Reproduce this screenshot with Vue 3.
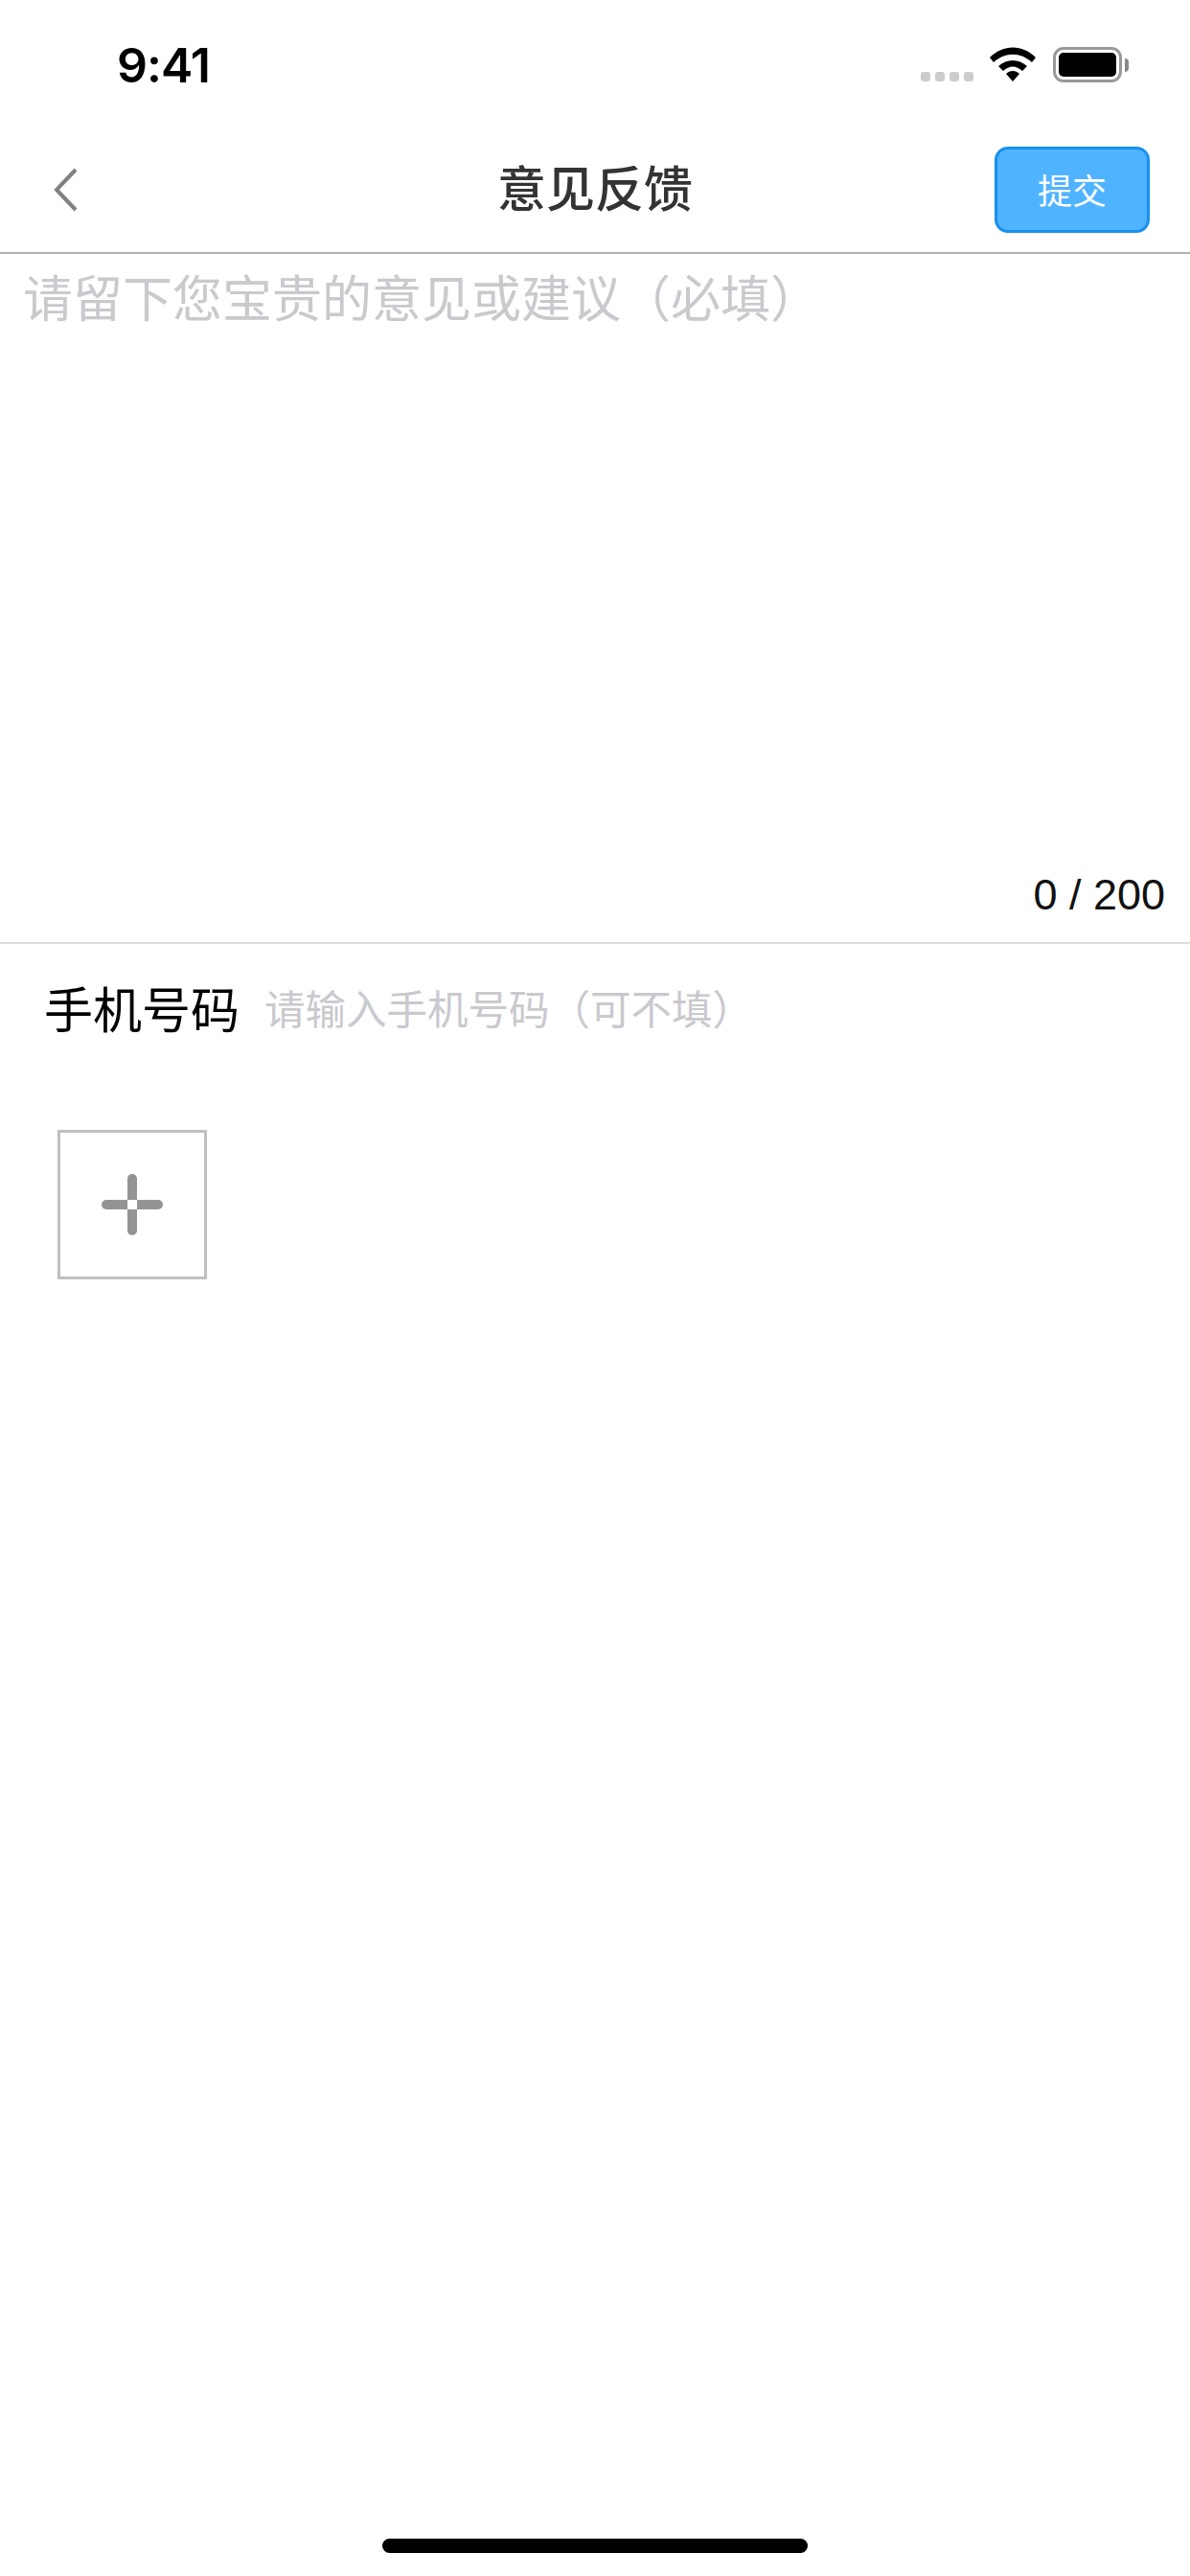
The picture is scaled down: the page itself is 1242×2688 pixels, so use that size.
<template>
  <div class="page">
    <div class="status-bar">
      <span class="time">9:41</span>
      <div class="status-icons">
        <div class="signal">
          <i v-for="n in 4" :key="n"></i>
        </div>
        <svg class="wifi" width="48" height="36" viewBox="0 0 48 36">
          <path d="M0 11 C14 -3 34 -3 48 11 L44 16 C32 5 16 5 4 16 Z" fill="#000"/>
          <path d="M9 20 C18 12 30 12 39 20 L34 25 C27 19 21 19 14 25 Z" fill="#000"/>
          <path d="M17 28 C21 24 27 24 31 28 L24 36 Z" fill="#000"/>
        </svg>
        <div class="battery">
          <div class="battery-body"><div class="battery-fill"></div></div>
          <div class="battery-cap"></div>
        </div>
      </div>
    </div>

    <div class="nav-bar">
      <svg class="back" width="26" height="48" viewBox="0 0 26 48">
        <path d="M23 3 L3 24 L23 45" fill="none" stroke="#808080" stroke-width="4"/>
      </svg>
      <span class="title">意见反馈</span>
      <div class="submit">提交</div>
    </div>

    <div class="feedback">
      <div class="placeholder">请留下您宝贵的意见或建议（必填）</div>
      <div class="count">0 / 200</div>
    </div>

    <div class="phone-row">
      <span class="phone-label">手机号码</span>
      <span class="phone-hint">请输入手机号码（可不填）</span>
    </div>

    <div class="upload">
      <div class="plus">
        <i class="arm arm-top"></i>
        <i class="arm arm-bottom"></i>
        <i class="arm arm-left"></i>
        <i class="arm arm-right"></i>
      </div>
    </div>

    <div class="home-indicator"></div>
  </div>
</template>

<script setup>
</script>

<style>
html, body {
  margin: 0;
  background: #fff;
}
</style>

<style scoped>
.page {
  position: relative;
  width: 1242px;
  height: 2688px;
  background: #fff;
  overflow: hidden;
  font-family: "Noto Sans CJK SC", sans-serif;
}

.status-bar {
  height: 132px;
  box-sizing: border-box;
  display: flex;
  justify-content: space-between;
  align-items: flex-start;
  padding: 49px 64px 0 122px;
}

.time {
  font-family: Inter, sans-serif;
  font-size: 50px;
  font-weight: 600;
  line-height: 38px;
  letter-spacing: -1px;
  color: #000;
}

.status-icons {
  display: flex;
  align-items: flex-start;
}

.signal {
  display: flex;
  gap: 5px;
  margin: 26px 17px 0 0;
}

.signal i {
  width: 10px;
  height: 10px;
  border-radius: 3px;
  background: #ccc;
}

.wifi {
  margin-right: 18px;
}

.battery {
  display: flex;
  align-items: center;
}

.battery-body {
  width: 72px;
  height: 37px;
  box-sizing: border-box;
  border: 3px solid #999;
  border-radius: 11px;
  padding: 3px;
}

.battery-fill {
  height: 100%;
  background: #000;
  border-radius: 5px;
}

.battery-cap {
  width: 4px;
  height: 14px;
  margin-left: 3px;
  background: #888;
  border-radius: 0 4px 4px 0;
}

.nav-bar {
  position: relative;
  height: 133px;
  box-sizing: border-box;
  display: flex;
  align-items: flex-start;
  justify-content: space-between;
  padding: 21px 42px 0 56px;
  border-bottom: 2px solid #b0b0b0;
}

.back {
  margin-top: 21px;
}

.title {
  position: absolute;
  left: 0;
  right: 0;
  top: 32px;
  text-align: center;
  font-size: 51px;
  line-height: 60px;
  font-weight: 500;
  color: #333;
}

.submit {
  width: 162px;
  height: 90px;
  box-sizing: border-box;
  border: 3px solid #1890ee;
  border-radius: 14px;
  padding-bottom: 3px;
  background: #4fb3ff;
  color: #fff;
  font-size: 36px;
  display: flex;
  align-items: center;
  justify-content: center;
}

.feedback {
  height: 720px;
  box-sizing: border-box;
  display: flex;
  flex-direction: column;
  justify-content: space-between;
  padding: 13px 26px 24px 24px;
  border-bottom: 2px solid #ddd;
}

.placeholder {
  font-size: 52px;
  line-height: 62px;
  color: #c9c9ce;
}

.count {
  align-self: flex-end;
  font-family: "Liberation Sans", sans-serif;
  font-size: 45px;
  line-height: 50px;
  color: #111;
}

.phone-row {
  display: flex;
  align-items: center;
  gap: 26px;
  padding: 36px 0 0 46px;
}

.phone-label {
  font-size: 51px;
  line-height: 60px;
  color: #000;
}

.phone-hint {
  font-size: 42.5px;
  line-height: 60px;
  color: #c9c9ce;
}

.upload {
  width: 156px;
  height: 156px;
  box-sizing: border-box;
  margin: 98px 0 0 60px;
  border: 3px solid #c0c0c0;
  display: flex;
  align-items: center;
  justify-content: center;
}

.plus {
  position: relative;
  width: 64px;
  height: 64px;
}

.arm {
  position: absolute;
  background: #949494;
}

.arm-top,
.arm-bottom {
  left: 27px;
  width: 10px;
  height: 27px;
}

.arm-top {
  top: 0;
  border-radius: 5px 5px 0 0;
}

.arm-bottom {
  bottom: 0;
  border-radius: 0 0 5px 5px;
}

.arm-left,
.arm-right {
  top: 27px;
  width: 27px;
  height: 10px;
}

.arm-left {
  left: 0;
  border-radius: 5px 0 0 5px;
}

.arm-right {
  right: 0;
  border-radius: 0 5px 5px 0;
}

.home-indicator {
  position: absolute;
  left: 399px;
  top: 2649px;
  width: 444px;
  height: 15px;
  border-radius: 8px;
  background: #000;
}
</style>
